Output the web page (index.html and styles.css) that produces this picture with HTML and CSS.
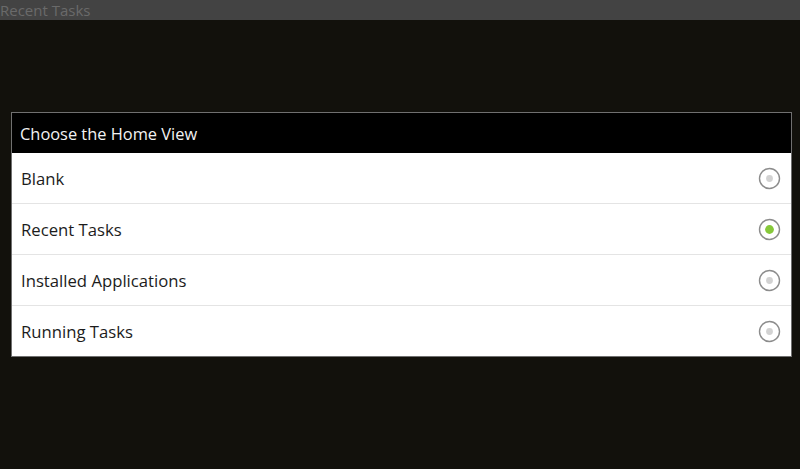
FILE: index.html
```html
<!DOCTYPE html>
<html>
<head>
<meta charset="utf-8">
<link rel="stylesheet" href="styles.css">
</head>
<body>
<div class="titlebar">Recent Tasks</div>
<div class="dialog">
  <div class="dialog-title">Choose the Home View</div>
  <div class="option">
    <span class="label">Blank</span>
    <svg class="radio" width="23" height="23" viewBox="0 0 23 23"><circle cx="11.5" cy="11.5" r="10" fill="#fff" stroke="#8c8c8c" stroke-width="1.4"/><circle cx="11.5" cy="11.5" r="3.4" fill="#d2d2d2"/></svg>
  </div>
  <div class="option">
    <span class="label">Recent Tasks</span>
    <svg class="radio" width="23" height="23" viewBox="0 0 23 23"><circle cx="11.5" cy="11.5" r="10" fill="#fff" stroke="#8c8c8c" stroke-width="1.4"/><circle cx="11.5" cy="11.5" r="4.4" fill="#86c83a"/></svg>
  </div>
  <div class="option">
    <span class="label">Installed Applications</span>
    <svg class="radio" width="23" height="23" viewBox="0 0 23 23"><circle cx="11.5" cy="11.5" r="10" fill="#fff" stroke="#8c8c8c" stroke-width="1.4"/><circle cx="11.5" cy="11.5" r="3.4" fill="#d2d2d2"/></svg>
  </div>
  <div class="option">
    <span class="label">Running Tasks</span>
    <svg class="radio" width="23" height="23" viewBox="0 0 23 23"><circle cx="11.5" cy="11.5" r="10" fill="#fff" stroke="#8c8c8c" stroke-width="1.4"/><circle cx="11.5" cy="11.5" r="3.4" fill="#d2d2d2"/></svg>
  </div>
</div>
</body>
</html>
```

FILE: styles.css
```css
html, body {
  margin: 0;
  padding: 0;
  background: #12110c;
  height: 100%;
  font-family: "Open Sans", "DejaVu Sans", sans-serif;
}
.titlebar {
  height: 20px;
  background: #434343;
  color: #6a6a6a;
  font-size: 15px;
  line-height: 20px;
  white-space: nowrap;
}
.dialog {
  margin: 92px 0 0 11px;
  width: 779px;
  border: 1px solid #707070;
  background: #ffffff;
}
.dialog-title {
  height: 40px;
  background: #000;
  color: #f2f2f2;
  font-size: 16.4px;
  line-height: 42px;
  padding-left: 8px;
}
.option {
  height: 50px;
  display: flex;
  align-items: center;
  justify-content: space-between;
  padding: 0 10px 0 9px;
  border-top: 1px solid #e4e4e4;
  color: #1c1c1c;
  font-size: 16.7px;
}
.dialog-title + .option {
  border-top: none;
}
.radio {
  display: block;
}
```
